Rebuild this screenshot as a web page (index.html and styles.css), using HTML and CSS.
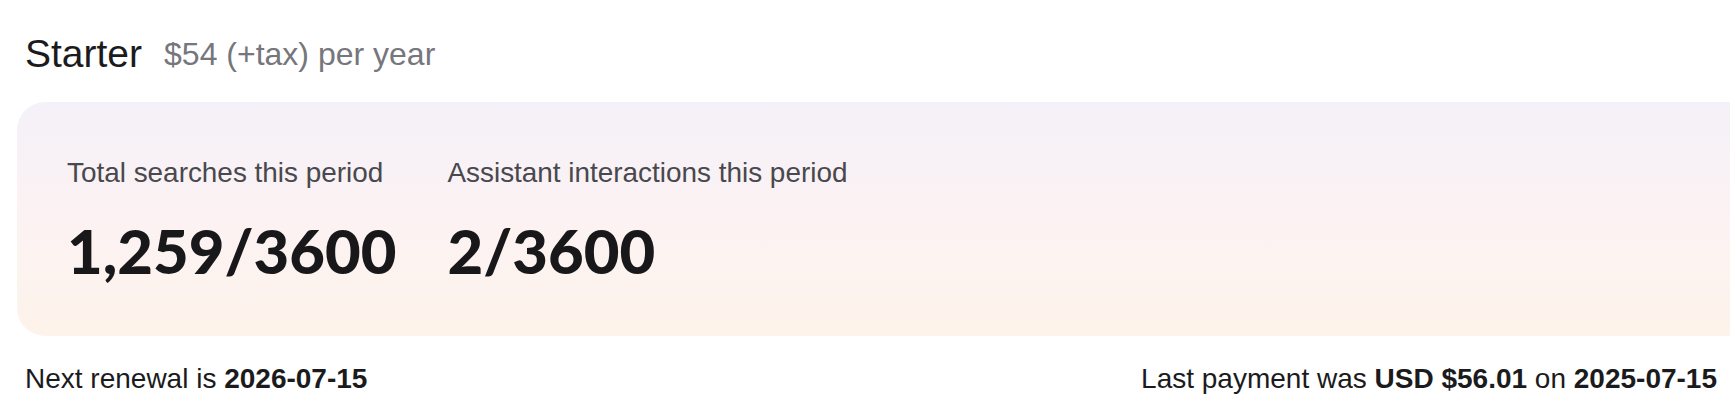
FILE: index.html
```html
<!DOCTYPE html>
<html lang="en">
<head>
<meta charset="utf-8">
<title>Starter plan</title>
<link rel="stylesheet" href="styles.css">
</head>
<body>
<div class="page">
  <div class="plan-header">
    <h1 class="plan-name">Starter</h1>
    <span class="plan-price">$54 (+tax) per year</span>
  </div>
  <div class="usage-card">
    <div class="stat">
      <div class="stat-label">Total searches this period</div>
      <div class="stat-value">1,259/3600</div>
    </div>
    <div class="stat">
      <div class="stat-label">Assistant interactions this period</div>
      <div class="stat-value">2/3600</div>
    </div>
  </div>
  <div class="billing">
    <div class="billing-item">Next renewal is <b>2026-07-15</b></div>
    <div class="billing-item">Last payment was <b>USD $56.01</b> on <b>2025-07-15</b></div>
  </div>
</div>
</body>
</html>
```
FILE: styles.css
```css
html, body {
  margin: 0;
  padding: 0;
  overflow: hidden;
  background: #ffffff;
}
body {
  font-family: "Liberation Sans", Arial, sans-serif;
  color: #1b1b1d;
}
.page {
  padding: 32px 13px 0 25px;
}
.plan-header {
  display: flex;
  align-items: center;
  gap: 22px;
}
.plan-name {
  margin: 0;
  font-size: 39px;
  font-weight: 400;
  line-height: normal;
  color: #1b1b1d;
}
.plan-price {
  font-size: 32px;
  color: #76767d;
}
.usage-card {
  margin: 26px -40px 0 -8px;
  padding: 55px 50px 49px 50px;
  border-radius: 28px;
  background: linear-gradient(180deg, #f4f1f8 0%, #fcf2f3 50%, #fdf3ea 100%);
  display: flex;
  gap: 51px;
}
.stat-label {
  font-size: 27.9px;
  line-height: normal;
  color: #48484e;
}
.stat-value {
  margin-top: 24px;
  font-family: Lato, "Liberation Sans", sans-serif;
  font-weight: 900;
  font-size: 61.6px;
  line-height: 74px;
  color: #18181b;
}
.billing {
  margin-top: 27px;
  display: flex;
  justify-content: space-between;
  font-size: 28px;
  color: #1b1b1d;
}
.billing b {
  font-weight: 700;
}
```
